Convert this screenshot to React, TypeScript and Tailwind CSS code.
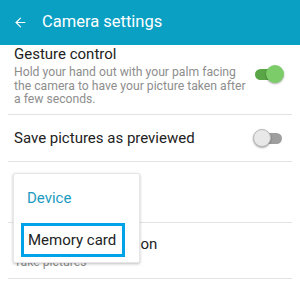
import { ArrowLeft } from 'lucide-react';

function Toggle({ on }: { on: boolean }) {
  return (
    <div className="relative w-[31px] h-[19px] flex items-center shrink-0">
      <div className={`h-[11px] w-[27px] rounded-full ml-[2px] ${on ? 'bg-[#5aa646]' : 'bg-[#9e9e9e]'}`} />
      <div
        className={`absolute top-0 w-[18px] h-[18px] rounded-full shadow-[0_1px_2px_rgba(0,0,0,0.35)] ${
          on ? 'left-[13px] bg-[#7ccd6a]' : 'left-0 bg-[#e8e8e8] border border-[#b8b8b8]'
        }`}
      />
    </div>
  );
}

export default function App() {
  return (
    <div className="relative w-[300px] h-[288px] overflow-hidden bg-white font-['Roboto',sans-serif]">
      <div className="h-[45px] bg-[#0aa0c4] flex items-center pl-[13px] gap-[14px] text-white">
        <ArrowLeft size={15} strokeWidth={1.75} />
        <span className="text-[16.5px] leading-none">Camera settings</span>
      </div>

      <div className="px-[8px]">
        <div className="h-[70px] border-b border-[#e3e3e3] flex items-start pl-[6px] pr-[8px]">
          <div className="flex-1">
            <div className="text-[15px] leading-[18px] text-[#222]">Gesture control</div>
            <div className="text-[12.2px] leading-[13.5px] text-[#8e8e8e] mt-[3px]">
              Hold your hand out with your palm facing the camera to have your picture taken after a few seconds.
            </div>
          </div>
          <div className="mt-[20px]">
            <Toggle on />
          </div>
        </div>

        <div className="h-[47px] border-b border-[#e3e3e3] flex items-center pl-[6px] pr-[8px]">
          <span className="flex-1 text-[15px] text-[#222]">Save pictures as previewed</span>
          <Toggle on={false} />
        </div>

        <div className="h-[61px] border-b border-[#e3e3e3] flex flex-col justify-center pl-[6px]">
          <span className="text-[15px] text-[#222]">Storage location</span>
          <span className="text-[12.2px] text-[#8e8e8e]">Device</span>
        </div>

        <div className="h-[56px] border-b border-[#e3e3e3] flex flex-col pt-[11px] pl-[6px]">
          <span className="text-[15px] leading-[20px] text-[#222]">Volume keys function</span>
          <span className="text-[12.2px] leading-[16px] text-[#8e8e8e]">Take pictures</span>
        </div>
      </div>

      <div className="absolute left-[13px] top-[173px] w-[127px] h-[90px] bg-white rounded-[2px] border border-[#e6e6e6] shadow-[0_1px_3px_rgba(0,0,0,0.25)] flex flex-col">
        <div className="h-[49px] flex items-center pl-[13px] text-[15px] text-[#1b9bc0]">Device</div>
        <div className="ml-[7px] w-[104px] h-[34px] border-[3px] border-[#00a3e8] flex items-center pl-[4px] text-[15px] text-[#222]">
          Memory card
        </div>
      </div>
    </div>
  );
}
